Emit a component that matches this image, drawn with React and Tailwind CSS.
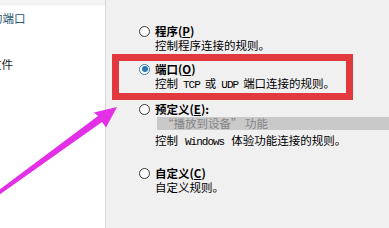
import React from "react";

const cjk = "font-['SimSun','Noto_Sans_CJK_SC',sans-serif]";
const mono = "font-['Liberation_Mono',monospace] text-[11px] tracking-[-1px]";

const Radio = ({ checked }) => (
  <span
    className={`w-[11px] h-[11px] rounded-full bg-white flex items-center justify-center shrink-0 border ${
      checked ? "border-[#3b7db3]" : "border-[#3a3a3a]"
    }`}
  >
    {checked && <span className="w-[6px] h-[6px] rounded-full bg-[#2f76ad]" />}
  </span>
);

const Option = ({ checked, title, hotkey, suffix = "" }) => (
  <div className="flex items-center gap-[5px] h-[14px]">
    <Radio checked={checked} />
    <span className="font-bold text-black">
      {title}(<span className="underline">{hotkey}</span>){suffix}
    </span>
  </div>
);

const Desc = ({ children, className = "" }) => (
  <div className={`pl-[16px] h-[14px] leading-[14px] text-black whitespace-nowrap ${className}`}>
    {children}
  </div>
);

const App = () => {
  return (
    <div className={`relative w-[389px] h-[228px] overflow-hidden flex ${cjk} text-[11.5px] leading-[14px]`}>
      {/* left tree panel, cut off */}
      <div className="w-[106px] bg-white border-r border-[#d9d9d9] flex flex-col">
        <div className="h-[5px] bg-[#f3f3f3] border-b border-[#ececec]" />
        <div className="mt-[6px] ml-[-9px] text-[#245774] text-[11.5px] leading-[14px] whitespace-nowrap">
          的端口
        </div>
        <div className="mt-[32px] ml-[-10px] text-[#222] text-[11.5px] leading-[14px] whitespace-nowrap">
          文件
        </div>
      </div>

      {/* rule type options */}
      <div className="flex-1 bg-[#f0f0f0] pl-[33px] pt-[24px] flex flex-col">
        <Option title="程序" hotkey="P" />
        <Desc>控制程序连接的规则。</Desc>

        <div className="mt-[2px] ml-[-27px] w-[241px] border-[7px] border-[#e1393e] pl-[20px] pt-[1px] pb-[3px]">
          <Option checked title="端口" hotkey="O" />
          <Desc>
            控制<span className={`${mono} mx-[5px]`}>TCP</span>或
            <span className={`${mono} mx-[5px]`}>UDP</span>端口连接的规则。
          </Desc>
        </div>

        <div className="mt-[2px]">
          <Option title="预定义" hotkey="E" suffix=":" />
        </div>
        <div className="mt-[1px] ml-[18px] h-[13px] bg-[#c9c9c9] pl-[5px] text-[#858585] leading-[13px] whitespace-nowrap">
          “播放到设备” 功能
        </div>
        <Desc className="mt-[3px]">
          控制<span className={`${mono} mx-[7px]`}>Windows</span>体验功能连接的规则。
        </Desc>

        <div className="mt-[19px]">
          <Option title="自定义" hotkey="C" />
        </div>
        <Desc>自定义规则。</Desc>
      </div>

      {/* annotation arrow */}
      <svg className="absolute inset-0 pointer-events-none" width="389" height="228" viewBox="0 0 389 228">
        <polygon
          points="-5,193 98,116 94,112.5 117,107 106,127.5 102,122 -3,196.5"
          fill="#e32fe6"
        />
      </svg>
    </div>
  );
};

export default App;
